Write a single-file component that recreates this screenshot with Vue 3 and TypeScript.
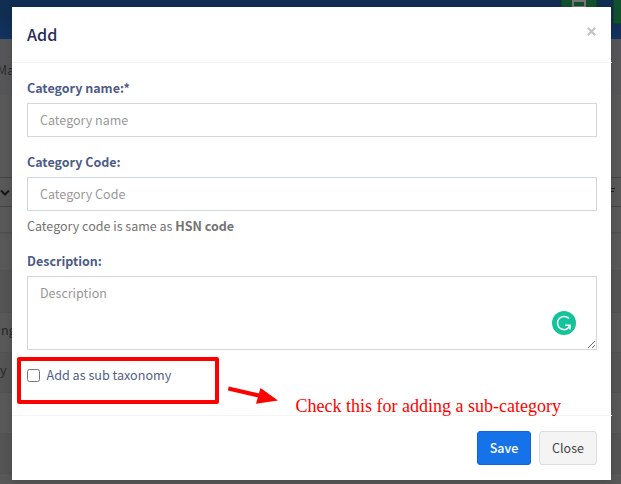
<script setup lang="ts">
import { ref } from 'vue'

interface Row {
  height: number
  text?: string
  shaded: boolean
}

const rows: Row[] = [
  { height: 37, shaded: false },
  { height: 42, shaded: true },
  { height: 40, shaded: false, text: 'ng' },
  { height: 40, shaded: true, text: 'y' },
  { height: 41, shaded: false },
  { height: 40, shaded: true },
  { height: 12, shaded: false },
]
const name = ref('')
const code = ref('')
const description = ref('')
const isSub = ref(false)
</script>

<template>
  <div class="screen">
    <div class="page">
      <div class="navbar">
        <div class="nav-btn calc"><span class="calc-icon"></span></div>
        <div class="nav-btn edge"></div>
      </div>
      <div class="crumbs"><span>Ma</span></div>
      <div class="blank"></div>
      <div class="filters">
        <svg width="12" height="29" viewBox="0 0 12 29"><path d="M1 12.5 L5 16.5 L9 12.5" fill="none" stroke="#171717" stroke-width="2" /></svg>
        <svg width="10" height="29" viewBox="0 0 10 29"><path d="M0 10.5 H4 M0 13.5 H3" stroke="#18222c" stroke-width="1" /></svg>
      </div>
      <div class="blank small"></div>
      <div v-for="(row, i) in rows" :key="i" class="row" :class="{ shaded: row.shaded }" :style="{ height: row.height + 'px' }">
        {{ row.text }}
      </div>
    </div>

    <form class="modal" @submit.prevent>
      <header>
        <h4>Add</h4>
        <button type="button" class="dismiss" aria-label="Close">
          <svg width="9" height="9" viewBox="0 0 9 9"><path d="M.8 .8 L8.2 8.2 M8.2 .8 L.8 8.2" stroke="#c4c4c4" stroke-width="2.2" /></svg>
        </button>
      </header>
      <div class="body">
        <label class="caption" for="name">Category name:*</label>
        <input id="name" v-model="name" class="field" placeholder="Category name" />
        <label class="caption second" for="code">Category Code:</label>
        <input id="code" v-model="code" class="field code" placeholder="Category Code" />
        <p class="help">Category code is same as <b>HSN code</b></p>
        <label class="caption third" for="desc">Description:</label>
        <div class="area">
          <textarea id="desc" v-model="description" class="field" placeholder="Description"></textarea>
          <svg class="badge" width="24" height="24" viewBox="0 0 24 24">
            <circle cx="12" cy="12" r="12" fill="#15c39a" />
            <path d="M17 7.6 A6.6 6.6 0 1 0 16.2 17.2 M13.2 14.2 H18 V18.6 M17.8 14.4 L15.8 17.4" fill="none" stroke="#fff" stroke-width="1.5" />
          </svg>
        </div>
        <label class="check">
          <input v-model="isSub" type="checkbox" />
          <span>Add as sub taxonomy</span>
        </label>
      </div>
      <footer>
        <button class="btn save">Save</button>
        <button type="button" class="btn close">Close</button>
      </footer>
    </form>

    <div class="frame"></div>
    <svg class="arrow" width="52" height="20" viewBox="0 0 52 20">
      <path d="M.3 3.5 L33 11" stroke="#f00" stroke-width="4" />
      <path d="M32.5 3 L50 15.5 L28 18.8 Z" fill="#f00" />
    </svg>
    <div class="note">Check this for adding a sub-category</div>
  </div>
</template>

<style>
body {
  margin: 0;
  overflow: hidden;
}
</style>

<style scoped>
* {
  box-sizing: border-box;
}
.screen {
  position: relative;
  width: 621px;
  height: 484px;
  overflow: hidden;
  font-family: 'Noto Sans CJK SC', sans-serif;
  font-size: 12.5px;
}
.page {
  height: 484px;
  background: #585858;
  color: #26262b;
}
.navbar {
  display: flex;
  height: 39px;
  padding-left: 561px;
  gap: 16px;
  background: linear-gradient(#102d52, #102d52 40%, #12335f);
}
.nav-btn {
  flex-shrink: 0;
  width: 36px;
  height: 24px;
  background: #12512d;
  border: 1px solid #0d4424;
  border-top: 0;
}
.calc {
  display: flex;
  justify-content: center;
}
.calc-icon {
  width: 14px;
  height: 7px;
  border: 2px solid #777;
  border-bottom-width: 1px;
}
.crumbs {
  height: 56px;
  line-height: 61px;
  background: #565658;
  overflow: hidden;
  color: #2b2b2b;
}
.crumbs span {
  margin-left: -3px;
}
.blank {
  height: 82px;
}
.blank.small {
  height: 26px;
  border-bottom: 1px solid #505050;
}
.filters {
  display: flex;
  justify-content: space-between;
  height: 30px;
  border-top: 1px solid #444;
  border-bottom: 1px solid #444;
}
.row {
  border-top: 1px solid #525252;
  line-height: 34px;
  padding-left: 1px;
}
.row:nth-last-child(4) {
  padding-left: 0;
}
.shaded {
  background: #545454;
}
.modal {
  position: absolute;
  left: 12px;
  top: 7px;
  width: 599px;
  height: 473px;
  background: #fff;
  box-shadow: 0 2px 8px rgba(0, 0, 0, 0.15);
}
header {
  display: flex;
  justify-content: space-between;
  width: 600px;
  height: 56px;
  padding: 0 16px 0 15px;
  border-bottom: 1px solid #f4f4f4;
}
h4 {
  margin: 0;
  font-size: 16.1px;
  font-weight: 500;
  line-height: 54px;
  color: #2a2d5c;
}
.dismiss {
  align-self: flex-start;
  display: flex;
  margin-top: 20px;
  padding: 0;
  border: 0;
  background: none;
}
.body {
  display: flex;
  flex-direction: column;
  height: 352px;
  padding: 15px 14px 0 15px;
}
.caption {
  height: 25px;
  line-height: 20px;
  font-weight: 700;
  color: #4e5b87;
}
.second {
  margin-top: 15px;
}
.third {
  margin-top: 14px;
}
.field {
  display: block;
  width: 570px;
  height: 34px;
  margin: 0;
  padding: 0 12px 1px;
  border: 1px solid #d2d6de;
  border-radius: 0;
  outline: 0;
  background: #fff;
  font: inherit;
  color: #555;
}
.field::placeholder {
  color: #999;
  opacity: 1;
}
.help {
  height: 26px;
  margin: 0;
  padding-top: 5px;
  line-height: 20px;
  color: #737373;
}
.area {
  position: relative;
  height: 74px;
}
textarea.field {
  height: 74px;
  padding-top: 6px;
  line-height: 20px;
}
.badge {
  position: absolute;
  left: 525px;
  top: 35px;
}
.check {
  display: flex;
  align-items: center;
  height: 20px;
  margin-top: 15px;
  gap: 6.5px;
  color: #525f89;
}
.check input {
  width: 13px;
  height: 13px;
  margin: 0;
}
.check span {
  line-height: 20px;
  padding-bottom: 1px;
  font-size: 12.6px;
}
footer {
  display: flex;
  justify-content: flex-end;
  gap: 8px;
  width: 600px;
  padding: 15px 15px 0;
  border-top: 1px solid #f4f4f4;
}
.btn {
  height: 34px;
  padding: 0 0 1px;
  border-radius: 3px;
  font: inherit;
}
.save {
  width: 54px;
  border: 1px solid #1367d5;
  background: #1572e8;
  color: #fff;
  font-weight: 500;
}
.close {
  width: 58px;
  border: 1px solid #ddd;
  background: #f4f4f4;
  color: #444;
}
.frame {
  position: absolute;
  left: 17px;
  top: 357px;
  width: 202px;
  height: 47px;
  border: 4px solid #f00;
  border-radius: 2px;
}
.arrow {
  position: absolute;
  left: 228px;
  top: 385px;
}
.note {
  position: absolute;
  left: 295.5px;
  top: 396px;
  font: 18px/20px 'Liberation Serif', serif;
  color: #f00;
  white-space: nowrap;
}
</style>
